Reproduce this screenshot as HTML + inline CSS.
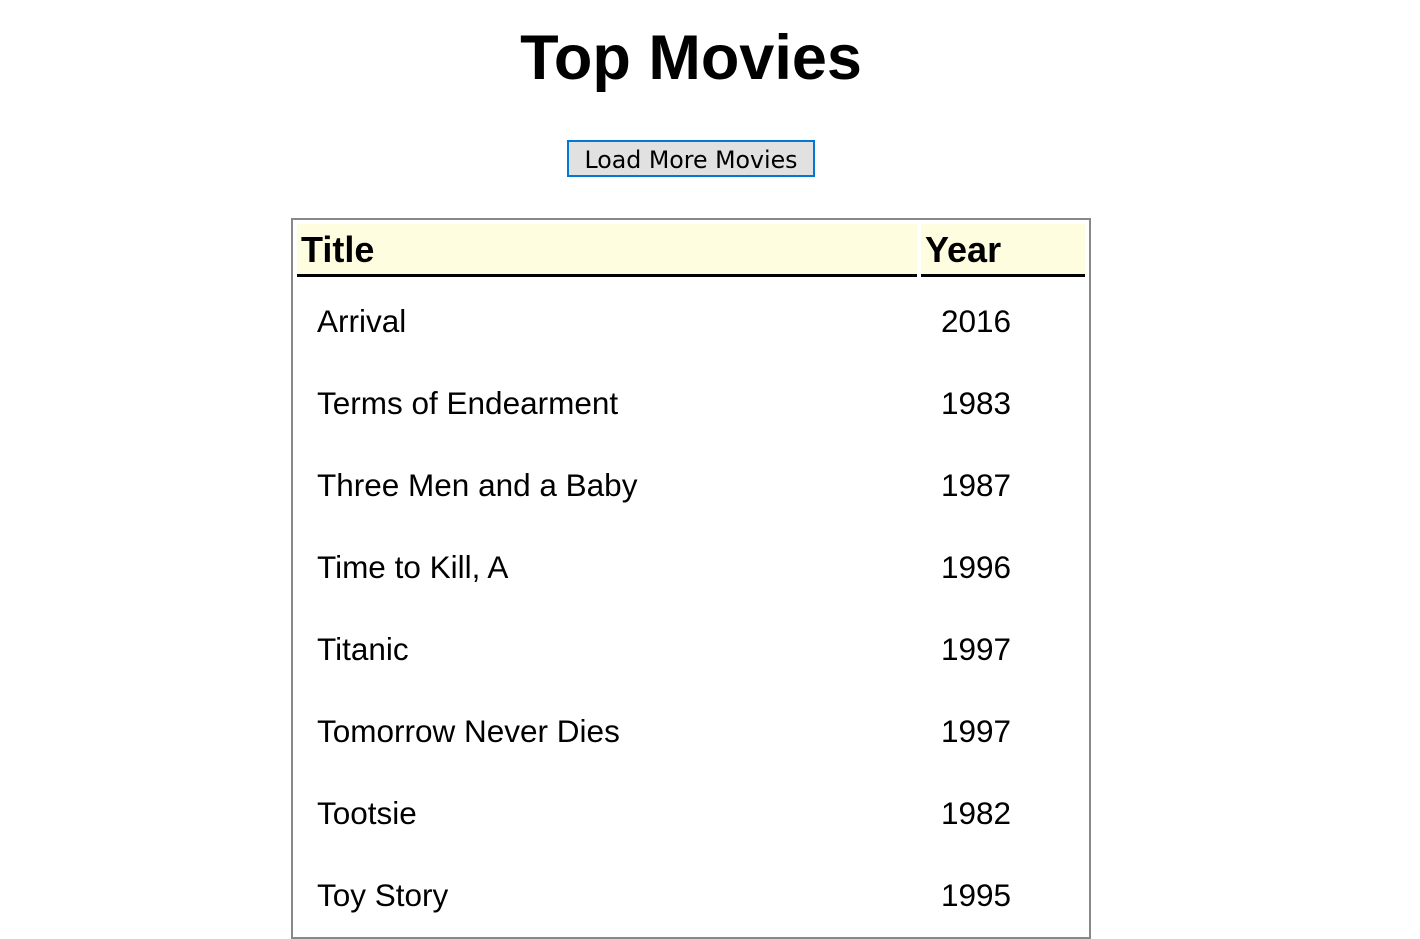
<!DOCTYPE html>
<html><head><style>
body{margin:0;background:#fff;font-family:"Liberation Sans",sans-serif;color:#000;overflow:hidden;height:854px;}
h1{position:absolute;top:21px;left:0;width:1382px;margin:0;text-align:center;font-size:63px;line-height:74px;font-weight:bold;}
button{position:absolute;left:567px;top:140px;width:248px;height:37px;background:#e1e1e1;border:2px solid #0078d7;font-family:"DejaVu Sans","Liberation Sans",sans-serif;font-size:23.7px;padding:2px 0 0;color:#000;}
table{position:absolute;left:291px;top:218px;width:800px;border:2px solid #888;border-spacing:4px;}
th{background:#fffde0;text-align:left;font-size:36px;font-weight:bold;border-bottom:3px solid #000;padding:2px 4px 0;height:48px;}
td{font-size:31.5px;padding:2px 20px 0 20px;height:76px;line-height:30px;}
</style></head><body>
<h1>Top Movies</h1>
<button>Load More Movies</button>
<table>
<tr><th style="width:612px">Title</th><th>Year</th></tr>
<tr><td>Arrival</td><td>2016</td></tr>
<tr><td>Terms of Endearment</td><td>1983</td></tr>
<tr><td>Three Men and a Baby</td><td>1987</td></tr>
<tr><td>Time to Kill, A</td><td>1996</td></tr>
<tr><td>Titanic</td><td>1997</td></tr>
<tr><td>Tomorrow Never Dies</td><td>1997</td></tr>
<tr><td>Tootsie</td><td>1982</td></tr>
<tr><td>Toy Story</td><td>1995</td></tr>
</table>
</body></html>
